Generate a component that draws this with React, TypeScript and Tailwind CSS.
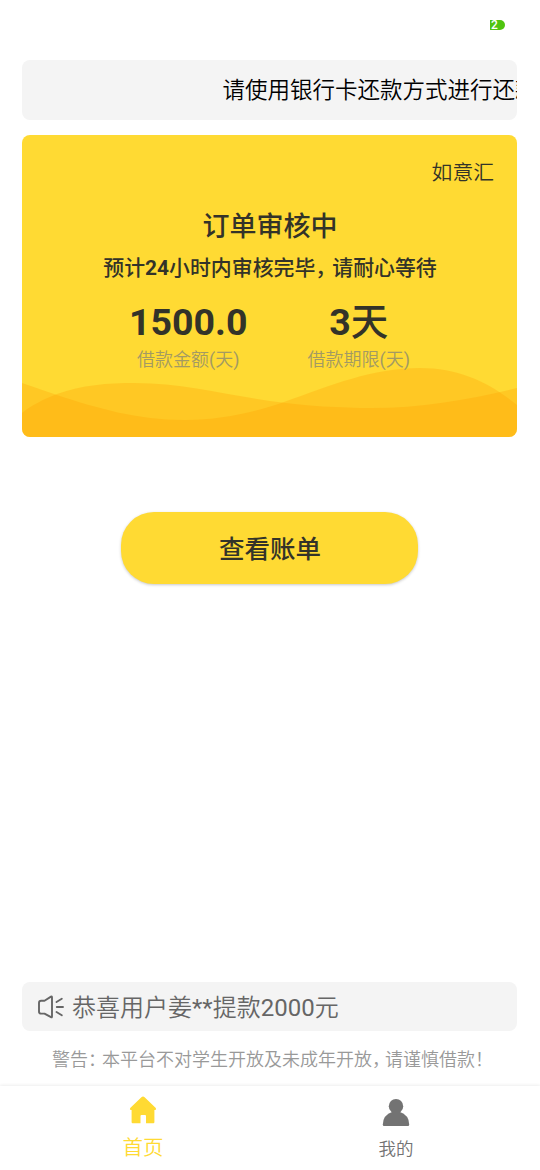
import React from 'react'

const TABS = [
  { id: 'home', label: '首页', active: true },
  { id: 'mine', label: '我的', active: false },
]

const LOAN_STATS = [
  { label: '借款金额', value: '1500.0', unit: '' },
  { label: '借款期限', value: '3', unit: '天' },
]

const App: React.FC = () => {
  return (
    <div className="w-[540px] h-[1170px] flex flex-col bg-white overflow-hidden font-[350] font-[Roboto,'Noto_Sans_CJK_SC',sans-serif]">
      {/* Status bar */}
      <div className="h-[60px] shrink-0 flex justify-end pt-5 pr-[35px]">
        <BatteryBadge />
      </div>

      {/* Scrolling notice */}
      <div className="ml-[22px] mr-[23px] h-[60px] shrink-0 flex items-center rounded-lg bg-[#f4f4f4] overflow-hidden whitespace-nowrap">
        <p className="pl-[200.5px] text-[22.5px] leading-[30px] text-black">请使用银行卡还款方式进行还款</p>
      </div>

      {/* Order card */}
      <div className="relative mt-[15px] ml-[22px] mr-[23px] h-[302px] shrink-0 rounded-lg bg-[#ffda33] overflow-hidden text-[#333329]">
        <CardWaves />
        <div className="relative flex flex-col items-center pt-[23px]">
          <p className="self-end pr-[23px] text-[20.8px] leading-[30px]">如意汇</p>
          <h1 className="mt-[19px] pl-[1px] text-[27px] leading-[40px] font-medium">订单审核中</h1>
          <p className="mt-[6px] pl-[1px] text-[20.9px] leading-[30px] font-medium whitespace-nowrap">
            预计<span className="font-bold">24</span>小时内审核完毕<span className="tracking-[-4px]">，</span>请耐心等待
          </p>
          <div className="mt-[17px] flex gap-[60px]">
            {LOAN_STATS.map(stat => (
              <div key={stat.label} className="flex flex-col items-center">
                <span className="text-[37.5px] leading-[44px] font-bold">
                  {stat.value}<span className="font-medium">{stat.unit}</span>
                </span>
                <span className="mt-[3px] text-[18px] leading-[26px] text-[#a39a63]">
                  {stat.label}<span className="font-normal">(</span>天<span className="font-normal">)</span>
                </span>
              </div>
            ))}
          </div>
        </div>
      </div>

      <button className="mt-[75px] ml-[121px] w-[297px] h-[72px] shrink-0 pt-[2px] pl-px rounded-[33px] bg-[#ffda33] text-[25.5px] font-medium text-[#333329] shadow-[0_1px_3px_rgba(0,0,0,0.22)]">
        查看账单
      </button>

      {/* Withdrawal ticker */}
      <div className="mt-auto ml-[22px] mr-[23px] h-[49px] shrink-0 flex items-center rounded-lg bg-[#f4f4f4] pl-[15px] text-[#666666]">
        <SpeakerIcon />
        <span className="ml-[7px] pt-[2px] text-[24px] leading-[36px]">
          恭喜用户姜<span className="font-normal">**</span>提款<span className="font-normal">2000</span>元
        </span>
      </div>
      <p className="mt-[16px] shrink-0 pl-[52px] text-[18px] leading-[26px] text-[#999999] whitespace-nowrap">
        警告<span className="tracking-[-4px]">：</span>本平台不对学生开放及未成年开放<span className="tracking-[-5px]">，</span>请谨慎借款！
      </p>

      {/* Tab bar */}
      <nav className="mt-[13px] h-[84px] shrink-0 grid grid-cols-2 bg-white shadow-[0_-1px_3px_rgba(0,0,0,0.07)]">
        {TABS.map(tab => (
          <div
            key={tab.id}
            className={tab.active
              ? 'flex flex-col items-center pt-[10px] pl-[16px] text-[#ffda33]'
              : 'flex flex-col items-center pt-[12px] pr-[18px] text-[#737373]'}
          >
            {tab.active ? <HomeIcon /> : <PersonIcon />}
            <span className={tab.active ? 'mt-[10px] text-[20.5px] leading-[28px]' : 'mt-[10px] text-[17.5px] leading-[26px]'}>
              {tab.label}
            </span>
          </div>
        ))}
      </nav>
    </div>
  )
}

const BatteryBadge: React.FC = () => (
  <div className="w-[15px] h-[10px] flex items-center rounded-r-[5px] bg-[#4fc40f]">
    <span className="pl-px text-[12px] leading-[10px] font-medium text-white">2</span>
  </div>
)

const CardWaves: React.FC = () => (
  <svg className="absolute inset-x-0 bottom-0" width="495" height="72" viewBox="0 0 495 72" fill="#ff9d00" fillOpacity="0.29">
    <path d="M0 18 C12 22 23 26 35 30 C75 43 115 55 163 55 C200 55 233 47 262 37 C310 20 350 3 398 3 C438 3 468 18 495 40 V72 H0 Z" />
    <path d="M0 48 C10 40 22 34 35 29 C60 20 85 18 113 18 C160 18 205 30 248 36 C285 41 318 43 350 43 C400 43 450 34 495 23 V72 H0 Z" />
  </svg>
)

const SpeakerIcon: React.FC = () => (
  <svg width="28" height="26" viewBox="0 0 28 26" fill="none" stroke="currentColor" strokeWidth="1.9" strokeLinejoin="round" strokeLinecap="round">
    <path d="M2 9 Q2 6.8 4.2 6.8 H7.5 L14 2.6 Q15 2.2 15 3.4 V22.6 Q15 23.8 14 23.2 L7.5 19.6 H4.2 Q2 19.6 2 17.4 Z" />
    <path d="M19.8 13 H26 M19.5 8 L24.8 4.8 M19.5 18 L24.8 21.2" />
  </svg>
)

const HomeIcon: React.FC = () => (
  <svg width="28" height="28" viewBox="0 0 28 28" fill="currentColor">
    <path d="M14 0.6 Q14.8 0.6 15.6 1.3 L26.8 12 Q27.8 13.8 26 14 H25.4 V26 Q25.4 27.2 24.4 27.2 H17 V20 Q17 19 16 19 H12.5 Q11.5 19 11.5 20 V27.2 H3.6 Q2.6 27.2 2.6 26 V14 H2 Q0.2 13.8 1.2 12 L12.4 1.3 Q13.2 0.6 14 0.6 Z" />
  </svg>
)

const PersonIcon: React.FC = () => (
  <svg width="28" height="28" viewBox="0 0 28 28" fill="currentColor">
    <ellipse cx="14" cy="8.2" rx="7.2" ry="7.2" />
    <path d="M0.8 26.5 Q1 17 10.5 13.8 H17.5 Q27 17 27.2 26.5 Q27.2 28 26 28 H2 Q0.8 28 0.8 26.5 Z" />
  </svg>
)

export default App
